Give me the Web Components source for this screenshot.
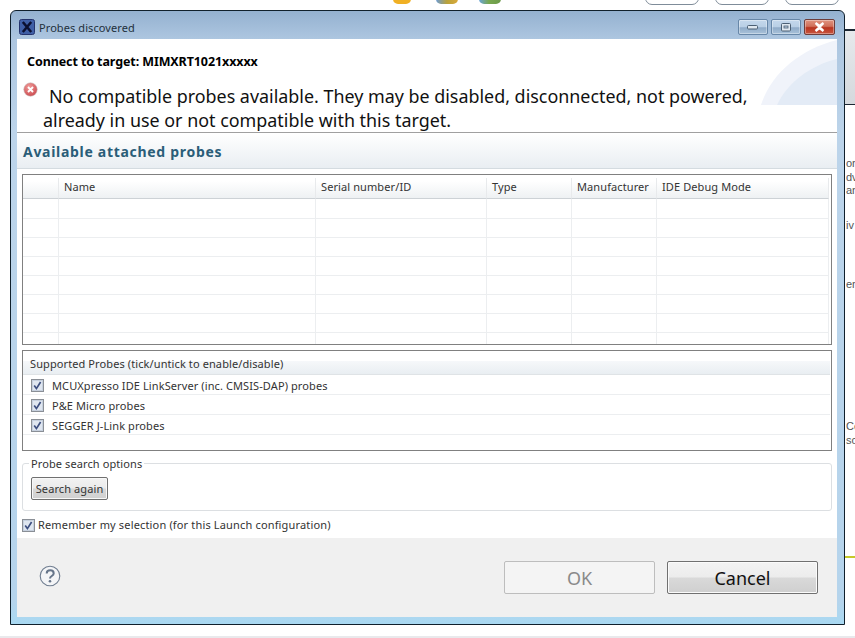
<!DOCTYPE html>
<html><head><meta charset="utf-8"><title>Probes discovered</title>
<style>
html,body{margin:0;padding:0;height:638px;overflow:hidden;background:#fff}
body{font-family:"Noto Sans","Open Sans",sans-serif;font-size:11.5px;color:#222}
</style></head><body>
<x-desktop>
  <x-window slot="window" title-text="Probes discovered">
    <x-banner target="Connect to target: MIMXRT1021xxxxx"
      line1="No compatible probes available. They may be disabled, disconnected, not powered,"
      line2="already in use or not compatible with this target."></x-banner>
    <x-section-head>Available attached probes</x-section-head>
    <x-content>
      <x-probe-table></x-probe-table>
      <x-probe-list></x-probe-list>
      <x-group legend="Probe search options"><x-btn small>Search again</x-btn></x-group>
      <x-remember><x-check></x-check><span>Remember my selection (for this Launch configuration)</span></x-remember>
    </x-content>
    <x-footer></x-footer>
  </x-window>
</x-desktop>
<script>
function def(name, html){
  customElements.define(name, class extends HTMLElement{
    constructor(){super();this.attachShadow({mode:'open'});}
    connectedCallback(){
      this.shadowRoot.innerHTML = typeof html==='function'?html(this):html;
    }
  });
}
const FONT='"Noto Sans","Open Sans",sans-serif';

def('x-desktop',()=>`<style>
:host{display:block;position:relative;width:855px;height:638px;overflow:hidden;background:#fff;font-family:${FONT}}
.ic{position:absolute;top:-6px;height:10px;border-radius:0 0 5px 5px}
.pill{position:absolute;top:-12px;width:52px;height:15px;border:1px solid #7f8c99;border-radius:7px;background:#fff}
.strip{position:absolute;left:845px;top:29px;width:10px;height:76px;background:#1c2733}
.scroll{position:absolute;left:845px;top:31px;width:10px;height:73px;background:linear-gradient(#e6e9ec,#d5d9dd)}
.sw{position:absolute;left:846px;width:9px;overflow:hidden;font:11px/12px "Liberation Sans",sans-serif;color:#555;white-space:pre}
.yl{position:absolute;left:845px;top:556px;width:10px;height:2px;background:#c6c92a}
.bot{position:absolute;left:0;right:0;top:636px;height:2px;background:#e9e9ec}
</style>
<div class="ic" style="left:393px;background:#f0b024;width:18px"></div>
<div class="ic" style="left:436px;width:22px;background:linear-gradient(90deg,#6c9bd3,#b9a23a 50%,#d9a93a)"></div>
<div class="ic" style="left:479px;width:22px;background:linear-gradient(90deg,#6ba4d8,#78a84f 45%,#6c9a4a)"></div>
<div class="pill" style="left:645px"></div><div class="pill" style="left:715px"></div><div class="pill" style="left:785px"></div>
<div class="strip"></div><div class="scroll"></div>
<div class="sw" style="top:157px">or</div><div class="sw" style="top:171px">dv</div><div class="sw" style="top:184px">an</div>
<div class="sw" style="top:219px">iv</div><div class="sw" style="top:278px">erf</div>
<div class="sw" style="top:420px">Co</div><div class="sw" style="top:434px">so</div>
<div class="yl"></div><div class="bot"></div>
<slot name="window"></slot>`);

def('x-window',el=>`<style>
:host{position:absolute;left:10px;top:10px;width:835px;height:615px;box-sizing:border-box;display:flex;flex-direction:column;
 border:1px solid #10202c;border-radius:6px 6px 0 0;padding:0 7px 7px 6px;font-family:${FONT};
 background:linear-gradient(#94b1d0 0,#adc6e0 28px,#bcd4ea 120px,#b5d4ec 590px,#a9d9f2 100%)}
.tb{height:28px;display:flex;align-items:center;flex:none;margin-left:2px;gap:4px}
.t{font-size:11px;color:#22303c;letter-spacing:.08px;padding-top:5px}
.logo{width:16px;height:16px;flex:none;display:block;margin-top:4px}
.ctl{margin-left:auto;display:flex;gap:3px;align-self:flex-start;margin-top:8px;margin-right:2px}
.b{height:16px;width:30px;box-sizing:border-box;border:1px solid #6787a8;border-radius:2px;display:flex;align-items:center;justify-content:center;
 background:linear-gradient(#c4d8ec 0,#b9cfe5 50%,#8fabc8 55%,#a9c2da 100%);box-shadow:inset 0 0 0 1px rgba(255,255,255,.35)}
.x{width:31px;background:linear-gradient(#e0937f 0,#d0705a 45%,#b8341f 55%,#c9563f 100%);border-color:#6e3d3a}
.body{flex:1;display:flex;flex-direction:column;background:#fff;min-height:0}
</style>
<div class="tb">
<svg class="logo" viewBox="0 0 16 16"><rect x=".5" y=".5" width="15" height="15" rx="2" fill="#3f5fa6" stroke="#24336d"/><path d="M3.8 3 8 8 3.8 13M12.2 3 8 8 12.2 13" fill="none" stroke="#0b1030" stroke-width="2.5"/></svg>
<span class="t">${el.getAttribute('title-text')}</span>
<div class="ctl">
<div class="b"><svg width="12" height="6" viewBox="0 0 12 6"><rect x=".5" y="1.5" width="10" height="3.5" rx="1" fill="#dfe8f0" stroke="#4b5f73"/></svg></div>
<div class="b"><svg width="11" height="9" viewBox="0 0 11 9"><rect x=".5" y=".5" width="9" height="7.5" rx="1" fill="#dfe8f0" stroke="#4b5f73"/><rect x="3" y="3" width="4" height="2" fill="#b9cde0" stroke="#4b5f73" stroke-width=".8"/></svg></div>
<div class="b x"><svg width="13" height="10" viewBox="0 0 13 10"><path d="M2.5 1 6.5 4 10.5 1M2.5 9 6.5 6 10.5 9M3 1.5 10 8.5M10 1.5 3 8.5" fill="none" stroke="#fff" stroke-width="2.4"/></svg></div>
</div></div>
<div class="body"><slot></slot></div>`);

def('x-banner',el=>`<style>
:host{display:block;flex:none;height:94px;box-sizing:border-box;background:#fff;border-bottom:1px solid #a0a0a0;position:relative;overflow:hidden;padding:14px 0 0 10px}
.tg{font-size:12.5px;font-weight:700;color:#000;line-height:17px;letter-spacing:-.1px}
.arc{position:absolute;right:0;top:0;width:76px;height:66px}
.msg{position:relative;font-size:17.9px;line-height:24px;color:#111;margin:14px 0 0 -1px;white-space:nowrap}
.l1{display:flex;align-items:flex-start}
.l2{padding-left:17px}
.e{width:15px;height:15px;flex:none;margin:-2px 11px 0 -3px}
</style>
<svg class="arc" viewBox="0 0 76 66"><path d="M0 66C10 34 40 10 76 1V66Z" fill="#f0f3fa"/><path d="M16 66C26 44 50 26 76 20V66Z" fill="#e3ebf6"/></svg>
<div class="tg">${el.getAttribute('target')}</div>
<div class="msg"><div class="l1"><svg class="e" viewBox="0 0 16 16"><defs><radialGradient id="g" cx=".4" cy=".3" r=".8"><stop offset="0" stop-color="#f09a98"/><stop offset="1" stop-color="#c8454a"/></radialGradient></defs><circle cx="8" cy="8" r="7.2" fill="url(#g)" stroke="#c9c2c2" stroke-width=".6"/><path d="M5.3 5.3 10.7 10.7M10.7 5.3 5.3 10.7" stroke="#fff" stroke-width="2"/></svg><span>${el.getAttribute('line1')}</span></div>
<div class="l2">${el.getAttribute('line2')}</div></div>`);

def('x-section-head',`<style>
:host{display:block;flex:none;height:36px;box-sizing:border-box;border-bottom:1px solid #d4dbe0;background:linear-gradient(#fff,#e9eef2);padding:9px 0 0 6px;
 font-size:14px;font-weight:700;color:#2a5d78;letter-spacing:.7px;line-height:20px}
</style><slot></slot>`);

def('x-content',`<style>
:host{display:flex;flex-direction:column;flex:none;height:369px;box-sizing:border-box;background:#fff;padding:5px 5px 0 5px}
</style><slot></slot>`);

const cols=[36,257,171,85,85,172];
const names=['','Name','Serial number/ID','Type','Manufacturer','IDE Debug Mode'];
def('x-probe-table',()=>`<style>
:host{display:block;height:171px;box-sizing:border-box;border:1px solid #808080;padding:3px 3px 0 0;flex:none;overflow:hidden}
.g{display:grid;grid-template-columns:${cols.map(c=>c+'px').join(' ')};font-size:11px;color:#333}
.h{height:21px;box-sizing:border-box;border-bottom:1px solid #cdd2d6;background:linear-gradient(#fff 0,#fff 15%,#eef1f3 100%);border-right:1px solid #e8eaec;padding-left:5px;line-height:18px;letter-spacing:.1px;white-space:nowrap}
.c{height:19px;box-sizing:border-box;border-bottom:1px solid #eceef0;border-right:1px solid #eceef0}
.c.f{height:20px}
.c.l{height:12px;border-bottom:0}
</style><div class="g">
${names.map(n=>`<div class="h">${n}</div>`).join('')}
${Array.from({length:7}).map((_,i)=>cols.map(()=>`<div class="c${i==0?' f':''}"></div>`).join('')).join('')}
${cols.map(()=>'<div class="c l"></div>').join('')}
</div>`);

def('x-check',`<style>
:host{display:inline-block;width:13px;height:13px;flex:none;line-height:0}
</style><svg width="13" height="13" viewBox="0 0 13 13"><rect x=".5" y=".5" width="12" height="12" fill="#c6d0de" stroke="#8a8f96"/><rect x="2" y="2" width="9" height="9" fill="#dfe6f0"/><path d="M3.2 6.6 5.4 9.6 9.6 3" fill="none" stroke="#3d4f80" stroke-width="1.7"/></svg>`);

def('x-probe-list',()=>`<style>
:host{display:block;flex:none;height:101px;box-sizing:border-box;margin-top:5px;border:1px solid #808080;font-size:11px;color:#333;padding-top:6px;padding-right:1px}
.h{height:18px;box-sizing:border-box;padding-left:7px;line-height:14px;background:linear-gradient(#fff 4px,#f6f8fa 4px,#e9eef2 100%);border-bottom:1px solid #dfe3e6;letter-spacing:.1px;white-space:nowrap}
.r{height:20px;box-sizing:border-box;border-bottom:1px solid #eceef0;display:flex;align-items:center;padding:2px 0 0 8px;gap:8px;letter-spacing:.1px;white-space:nowrap}
</style>
<div class="h">Supported Probes (tick/untick to enable/disable)</div>
<div class="r"><x-check></x-check><span>MCUXpresso IDE LinkServer (inc. CMSIS-DAP) probes</span></div>
<div class="r"><x-check></x-check><span>P&amp;E Micro probes</span></div>
<div class="r"><x-check></x-check><span>SEGGER J-Link probes</span></div>`);

def('x-group',el=>`<style>
:host{display:block;flex:none;height:48px;box-sizing:border-box;margin-top:12px;border:1px solid #dcdfe2;border-radius:3px;position:relative;padding:13px 0 0 8px;font-size:11px;color:#333}
.lg{position:absolute;left:6px;top:-7px;background:#fff;padding:0 2px;line-height:14px;letter-spacing:.1px}
</style><span class="lg">${el.getAttribute('legend')}</span><slot></slot>`);

def('x-btn',el=>{
 const small=el.hasAttribute('small'),dis=el.hasAttribute('disabled');
 return `<style>
:host{display:inline-block}
.b{box-sizing:border-box;display:flex;align-items:center;justify-content:center;border-radius:2px;
 ${small?`width:77px;height:23px;font-size:11px;letter-spacing:.1px;color:#333;border:1px solid #707070;background:linear-gradient(#f2f2f2 0,#ebebeb 48%,#d8d8d8 52%,#d0d0d0 100%);box-shadow:inset 0 0 0 1px #f8f8f8`:
 dis?`width:151px;height:33px;font-size:18px;color:#8a8a8a;border:1px solid #bdbdbd;background:#f4f4f4`:
 `width:151px;height:33px;font-size:18px;color:#111;border:1px solid #707070;background:linear-gradient(#f3f3f3 0,#ececec 48%,#d9d9d9 52%,#cfcfcf 100%);box-shadow:inset 0 0 0 1px #fbfbfb`}}
</style><div class="b"><slot></slot></div>`});

def('x-remember',`<style>
:host{display:flex;flex:none;align-items:center;gap:3px;height:27px;font-size:11px;color:#333;letter-spacing:.16px;box-sizing:border-box;white-space:nowrap}
::slotted(x-check){margin-top:1px}
</style><slot></slot>`);

def('x-footer',`<style>
:host{display:flex;flex:1;align-items:flex-start;background:#f0f0f0;padding:23px 19px 0 22px;min-height:0}
.q{display:block;margin-top:4px;width:22px;height:22px}
.sp{flex:1}
.gap{width:12px}
</style>
<svg class="q" viewBox="0 0 22 22"><circle cx="11" cy="11" r="9.8" fill="#f4f5f7" stroke="#6f7d90" stroke-width="1.1"/><path d="M7.7 8.4c0-4.2 7-4.2 7 0 0 2.6-3.7 2.6-3.7 5" fill="none" stroke="#66758a" stroke-width="2"/><circle cx="11" cy="16.2" r="1.3" fill="#66758a"/></svg>
<div class="sp"></div><x-btn disabled>OK</x-btn><div class="gap"></div><x-btn>Cancel</x-btn>`);
</script>
</body></html>
